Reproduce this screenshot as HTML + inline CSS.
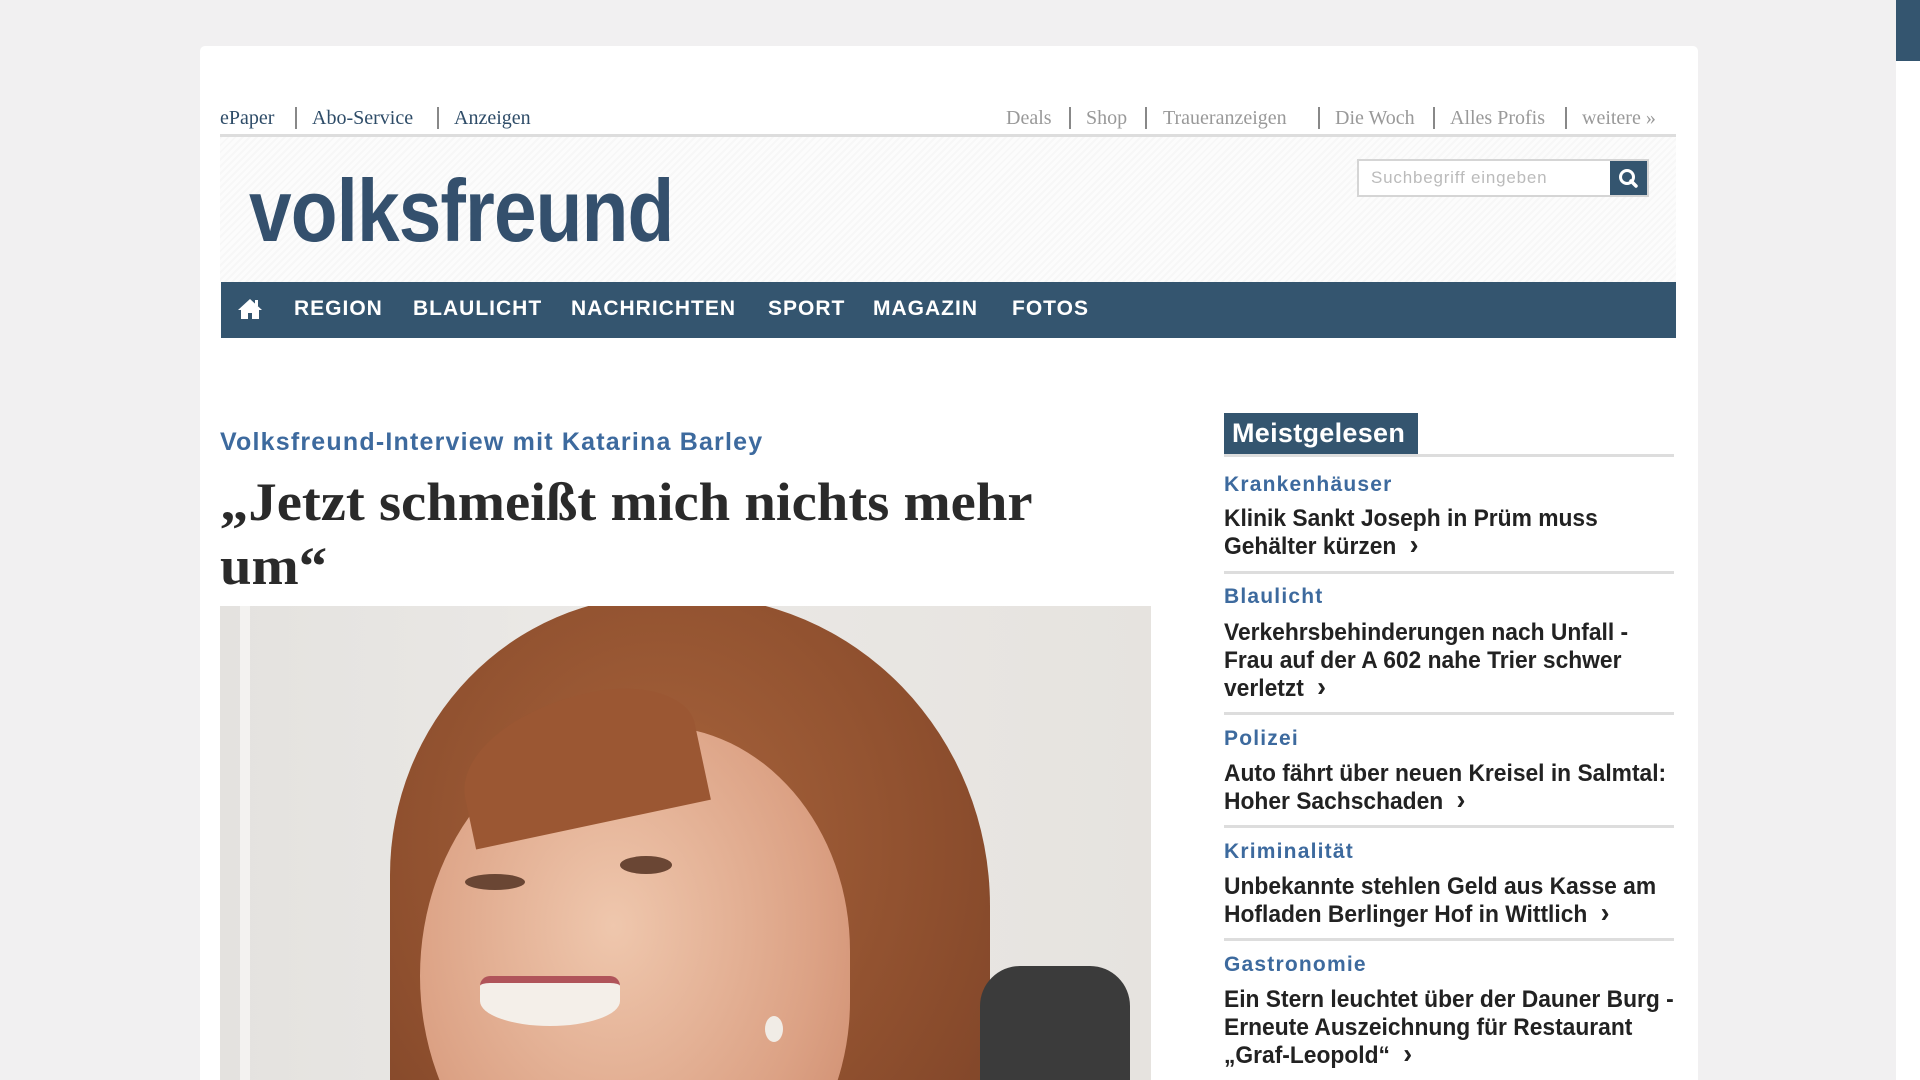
<!DOCTYPE html>
<html><head><meta charset="utf-8"><style>
*{margin:0;padding:0;box-sizing:border-box}
html,body{width:1920px;height:1080px;overflow:hidden}
body{background:#f1f0f1;position:relative;font-family:"Liberation Sans",sans-serif}
.a{position:absolute}
#card{left:200px;top:46px;width:1498px;height:1034px;background:#fff;border-radius:5px 5px 0 0}
.tl{font-family:"Liberation Serif",serif;font-size:20px;top:107px;white-space:nowrap}
.l{color:#2e4c68}.r{color:#999}
.sep{width:2px;height:22px;background:#888;top:107px}
#hdr{left:220px;top:134px;width:1456px;height:148px;border-top:3px solid #ddd;background:repeating-linear-gradient(135deg,#f7f7f7 0 2px,#fcfcfc 2px 5px)}
#logo{left:249px;top:160px;font-size:88px;font-weight:bold;color:#34506d;transform:scaleX(.87);transform-origin:left top;letter-spacing:-1px;white-space:nowrap}
#nav{left:221px;top:282px;width:1455px;height:56px;background:#34556f}
.n{color:#fff;font-weight:bold;font-size:21px;letter-spacing:1px;top:297px;white-space:nowrap}
.cat{color:#3d6a9e;font-weight:bold;font-size:21px;letter-spacing:1.2px;left:1224px;white-space:nowrap}
.tt{left:1224px;font-weight:bold;font-size:24px;color:#222;white-space:nowrap;transform:scaleX(.95);transform-origin:left top;line-height:28px}
.hr{left:1224px;width:450px;height:3px;background:#ddd}
.ch{display:inline-block;margin-left:14px;font-size:28px;line-height:20px;font-weight:bold}
</style></head><body>
<div class="a" id="card"></div>
<div class="a" style="left:1896px;top:0;width:24px;height:61px;background:#34556f"></div>
<div class="a" style="left:1896px;top:61px;width:24px;height:1019px;background:#fff"></div>

<div class="a tl l" style="left:220px">ePaper</div>
<div class="a sep" style="left:295px"></div>
<div class="a tl l" style="left:312px">Abo-Service</div>
<div class="a sep" style="left:437px"></div>
<div class="a tl l" style="left:454px">Anzeigen</div>
<div class="a tl r" style="left:1006px">Deals</div>
<div class="a sep" style="left:1069px"></div>
<div class="a tl r" style="left:1086px">Shop</div>
<div class="a sep" style="left:1145px"></div>
<div class="a tl r" style="left:1163px">Traueranzeigen</div>
<div class="a sep" style="left:1318px"></div>
<div class="a tl r" style="left:1335px">Die Woch</div>
<div class="a sep" style="left:1433px"></div>
<div class="a tl r" style="left:1450px">Alles Profis</div>
<div class="a sep" style="left:1565px"></div>
<div class="a tl r" style="left:1582px">weitere »</div>

<div class="a" id="hdr"></div>
<div class="a" id="logo">volksfreund</div>
<div class="a" style="left:1357px;top:159px;width:292px;height:38px;border:2px solid #d5d5d5;background:#fff"></div>
<div class="a" style="left:1371px;top:168px;font-size:17px;color:#bbb;letter-spacing:.8px">Suchbegriff eingeben</div>
<div class="a" style="left:1610px;top:161px;width:37px;height:34px;background:#34556f">
<svg width="37" height="34" viewBox="0 0 37 34"><circle cx="17" cy="16" r="6.5" fill="none" stroke="#fff" stroke-width="3"/><path d="M21 20l5 5" stroke="#fff" stroke-width="3.5" stroke-linecap="round"/></svg></div>

<div class="a" id="nav"></div>
<svg class="a" style="left:237px;top:298px" width="26" height="22" viewBox="0 0 26 22"><path d="M13 1L1 12h3v9h7v-6h4v6h7v-9h3z" fill="#fff"/><rect x="18" y="2" width="3" height="6" fill="#fff"/></svg>
<div class="a n" style="left:294px">REGION</div>
<div class="a n" style="left:413px">BLAULICHT</div>
<div class="a n" style="left:571px">NACHRICHTEN</div>
<div class="a n" style="left:768px">SPORT</div>
<div class="a n" style="left:873px">MAGAZIN</div>
<div class="a n" style="left:1012px">FOTOS</div>

<div class="a" style="left:220px;top:428px;font-size:25px;font-weight:bold;color:#3d6a9e;letter-spacing:1.2px;white-space:nowrap">Volksfreund-Interview mit Katarina Barley</div>
<div class="a" style="left:220px;top:470px;font-family:'Liberation Serif',serif;font-size:54px;font-weight:bold;color:#2a2a2a;line-height:64px;white-space:nowrap;transform:scaleX(1.05);transform-origin:left top">„Jetzt schmeißt mich nichts mehr<br>um“</div>

<div class="a" style="left:220px;top:606px;width:931px;height:474px;overflow:hidden;background:linear-gradient(90deg,#e4e2df 0%,#ebe9e6 40%,#e6e3df 100%)">
<div class="a" style="left:20px;top:0;width:10px;height:474px;background:#f3f2f0"></div>
<div class="a" style="left:170px;top:-10px;width:600px;height:620px;border-radius:45% 50% 10% 10%;background:radial-gradient(ellipse at 45% 40%,#a8643c,#8e4f2e 60%,#7a4127)"></div>
<div class="a" style="left:200px;top:120px;width:430px;height:500px;border-radius:50% 45% 45% 50%;background:radial-gradient(ellipse at 45% 40%,#efc7ad,#dca285 60%,#c98466)"></div>
<div class="a" style="left:240px;top:90px;width:240px;height:130px;border-radius:60% 40% 0 0;background:#9b5733;transform:rotate(-12deg)"></div>
<div class="a" style="left:245px;top:268px;width:60px;height:16px;border-radius:50%;background:#6a4634"></div>
<div class="a" style="left:400px;top:250px;width:52px;height:18px;border-radius:50%;background:#6a4634"></div>
<div class="a" style="left:260px;top:370px;width:140px;height:50px;border-radius:10px 10px 50% 50%;background:#f4efe9;border-top:7px solid #b0545a"></div>
<div class="a" style="left:545px;top:410px;width:18px;height:26px;border-radius:50%;background:#f1ece6"></div>
<div class="a" style="left:760px;top:360px;width:150px;height:200px;border-radius:40px;background:#3b3b3b"></div>
</div>

<div class="a" style="left:1224px;top:413px;width:194px;height:42px;background:#34556f;color:#fff;font-size:27px;font-weight:bold;padding:5px 8px;white-space:nowrap;letter-spacing:.3px">Meistgelesen</div>
<div class="a hr" style="top:454px"></div>

<div class="a cat" style="top:473px">Krankenhäuser</div>
<div class="a tt" style="top:505px">Klinik Sankt Joseph in Prüm muss<br>Gehälter kürzen<span class="ch">›</span></div>
<div class="a hr" style="top:571px"></div>

<div class="a cat" style="top:585px">Blaulicht</div>
<div class="a tt" style="top:619px">Verkehrsbehinderungen nach Unfall -<br>Frau auf der A 602 nahe Trier schwer<br>verletzt<span class="ch">›</span></div>
<div class="a hr" style="top:712px"></div>

<div class="a cat" style="top:727px">Polizei</div>
<div class="a tt" style="top:760px">Auto fährt über neuen Kreisel in Salmtal:<br>Hoher Sachschaden<span class="ch">›</span></div>
<div class="a hr" style="top:825px"></div>

<div class="a cat" style="top:840px">Kriminalität</div>
<div class="a tt" style="top:873px">Unbekannte stehlen Geld aus Kasse am<br>Hofladen Berlinger Hof in Wittlich<span class="ch">›</span></div>
<div class="a hr" style="top:938px"></div>

<div class="a cat" style="top:953px">Gastronomie</div>
<div class="a tt" style="top:986px">Ein Stern leuchtet über der Dauner Burg -<br>Erneute Auszeichnung für Restaurant<br>„Graf-Leopold“<span class="ch">›</span></div>
</body></html>
